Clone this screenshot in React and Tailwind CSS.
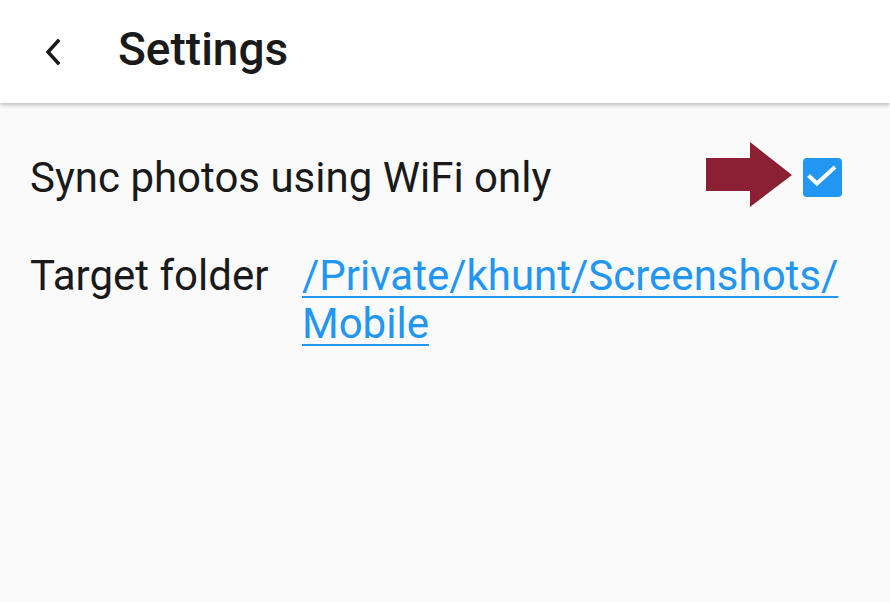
export default function App() {
  return (
    <div className="w-[890px] h-[602px] bg-[#fafafa] overflow-hidden relative" style={{ fontFamily: "Roboto, 'Noto Sans', sans-serif" }}>
      {/* App bar */}
      <div className="h-[103px] bg-white flex items-center shadow-[0_2px_4px_rgba(0,0,0,0.25)] relative z-10">
        <div className="w-[118px] flex items-center pl-[42px]">
          <svg width="24" height="30" viewBox="0 0 24 30" fill="none" stroke="#1a1a1a" strokeWidth="3.5" strokeLinecap="square">
            <path d="M16 4 L6 15 L16 26" />
          </svg>
        </div>
        <h1 className="text-[46px] font-medium text-[#1a1a1a] leading-none mb-[6px]">Settings</h1>
      </div>

      {/* Content */}
      <div className="pl-[30px] pr-[48px] pt-[51px] text-[#1a1a1a]">
        <div className="flex items-center justify-between h-[48px]">
          <span className="text-[42px] leading-[48px]">Sync photos using WiFi only</span>
          <div className="w-[39px] h-[39px] rounded-[4px] bg-[#2196f3] -mt-[2px]">
            <svg width="39" height="39" viewBox="0 0 39 39" fill="none" stroke="white" strokeWidth="4">
              <path d="M5.5 17.5 L14 25.5 L32 9" />
            </svg>
          </div>
        </div>

        <div className="flex mt-[50px]">
          <span className="text-[42px] leading-[48px] w-[272px] shrink-0">Target folder</span>
          <a href="#" className="text-[42px] leading-[48px] text-[#2196f3] underline underline-offset-[6px] decoration-[2px]">
            /Private/khunt/Screenshots/<br />Mobile
          </a>
        </div>
      </div>

      {/* Annotation arrow */}
      <svg className="absolute left-[706px] top-[142px]" width="88" height="66" viewBox="0 0 88 66">
        <polygon points="0,16 44,16 44,0 86,33 44,65 44,49 0,49" fill="#8b2035" />
      </svg>
    </div>
  );
}
